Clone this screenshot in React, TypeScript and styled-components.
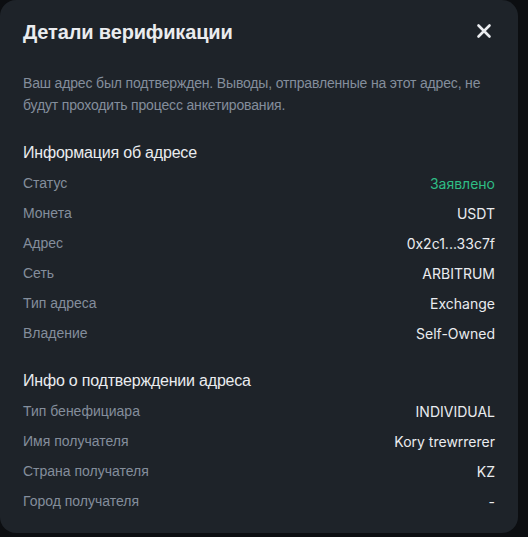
import styled, { createGlobalStyle } from 'styled-components';

const Global = createGlobalStyle`
  html, body {
    margin: 0;
    padding: 0;
    background: #0c0e11;
  }
  body {
    font-family: "Liberation Sans", Arial, sans-serif;
    -webkit-font-smoothing: antialiased;
  }
`;

const Page = styled.div`
  width: 528px;
  height: 537px;
  overflow: hidden;
  background: #0c0e11;
`;

const Panel = styled.div`
  width: 518px;
  height: 533px;
  box-sizing: border-box;
  background: #1e2329;
  border-radius: 16px;
  padding: 0 23px 16px;
  display: flex;
  flex-direction: column;
`;

const Header = styled.div`
  height: 64px;
  display: flex;
  align-items: center;
  justify-content: space-between;
`;

const Title = styled.h2`
  margin: 0;
  font-size: 20px;
  font-weight: 700;
  letter-spacing: -0.15px;
  color: #eaecef;
`;

const CloseButton = styled.button`
  width: 24px;
  height: 24px;
  padding: 0;
  margin-right: -1px;
  margin-top: -2px;
  border: none;
  background: transparent;
  display: flex;
  align-items: center;
  justify-content: center;
  cursor: pointer;
`;

const Description = styled.p`
  margin: 8px 0 22px;
  font-size: 14px;
  line-height: 22px;
  letter-spacing: -0.16px;
  color: #848e9c;
`;

const SectionTitle = styled.h3<{ $gap?: number }>`
  margin: ${(p) => p.$gap ?? 0}px 0 0;
  height: 30px;
  display: flex;
  align-items: center;
  font-size: 16px;
  font-weight: 500;
  letter-spacing: -0.2px;
  color: #eaecef;
`;

const Row = styled.div`
  height: 30px;
  display: flex;
  align-items: center;
  justify-content: space-between;
  font-size: 14px;
`;

const Label = styled.span`
  color: #848e9c;
`;

const Value = styled.span<{ $accent?: boolean }>`
  font-family: Inter, "Liberation Sans", sans-serif;
  font-weight: 400;
  font-size: 14px;
  color: ${(p) => (p.$accent ? '#2ebd85' : '#eaecef')};
`;

const addressInfo: [string, string, boolean?][] = [
  ['Статус', 'Заявлено', true],
  ['Монета', 'USDT'],
  ['Адрес', '0x2c1...33c7f'],
  ['Сеть', 'ARBITRUM'],
  ['Тип адреса', 'Exchange'],
  ['Владение', 'Self-Owned'],
];

const confirmInfo: [string, string][] = [
  ['Тип бенефициара', 'INDIVIDUAL'],
  ['Имя получателя', 'Kory trewrrerer'],
  ['Страна получателя', 'KZ'],
  ['Город получателя', '-'],
];

export default function App() {
  return (
    <Page>
      <Global />
      <Panel>
        <Header>
          <Title>Детали верификации</Title>
          <CloseButton aria-label="Закрыть">
            <svg width="16" height="16" viewBox="0 0 16 16">
              <path
                d="M2.5 2.5L13.5 13.5M13.5 2.5L2.5 13.5"
                stroke="#eaecef"
                strokeWidth="2.6"
                strokeLinecap="round"
              />
            </svg>
          </CloseButton>
        </Header>
        <Description>
          Ваш адрес был подтвержден. Выводы, отправленные на этот адрес, не
          будут проходить процесс анкетирования.
        </Description>

        <SectionTitle>Информация об адресе</SectionTitle>
        {addressInfo.map(([label, value, accent]) => (
          <Row key={label}>
            <Label>{label}</Label>
            <Value $accent={accent}>{value}</Value>
          </Row>
        ))}

        <SectionTitle $gap={18}>Инфо о подтверждении адреса</SectionTitle>
        {confirmInfo.map(([label, value]) => (
          <Row key={label}>
            <Label>{label}</Label>
            <Value>{value}</Value>
          </Row>
        ))}
      </Panel>
    </Page>
  );
}
